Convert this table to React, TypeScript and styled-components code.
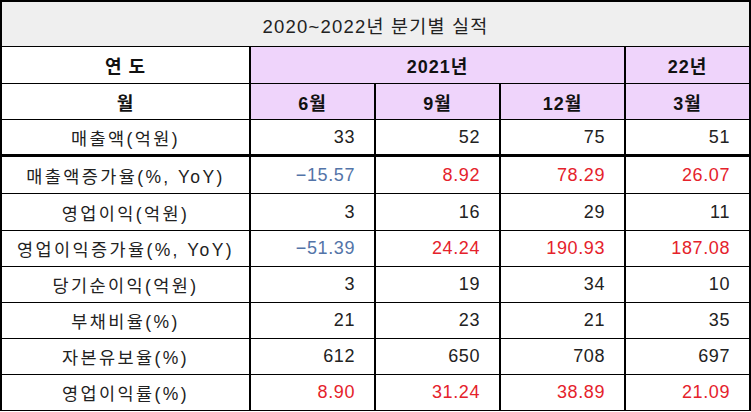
import React from "react";
import styled, { createGlobalStyle } from "styled-components";

const GlobalStyle = createGlobalStyle`
    html, body {
        margin: 0;
        padding: 0;
        background: #ffffff;
    }
    body {
        font-family: "Liberation Sans", "Noto Sans CJK KR", sans-serif;
        color: #111;
    }
`;

const Grid = styled.div`
    display: grid;
    width: 751px;
    box-sizing: border-box;
    grid-template-columns: 249px 125px 125px 125px 125px;
    grid-template-rows: 45px 37px 36px 37px 37px 37px 36px 36px 36px 36px 36px;
    border-left: 2px solid #000;
    border-top: 2px solid #000;
`;

const Cell = styled.div<{ $span?: number; $bg?: string; $thick?: boolean }>`
    box-sizing: border-box;
    grid-column: span ${(p) => p.$span ?? 1};
    background: ${(p) => p.$bg ?? "#ffffff"};
    border-right: 2px solid #000;
    border-bottom: ${(p) => (p.$thick ? "3px" : "1px")} solid #000;
    display: flex;
    align-items: center;
    justify-content: center;
    font-size: 17px;
`;

const TitleCell = styled(Cell)`
    font-size: 18.5px;
    letter-spacing: 1.2px;
    padding-top: 2px;
    color: #222;
`;

const HeadCell = styled(Cell)`
    font-weight: bold;
    font-size: 18px;
    letter-spacing: 1px;
`;

const LabelCell = styled(Cell)`
    font-size: 17.5px;
    letter-spacing: 2.4px;
    color: #222;
`;

const NumCell = styled(Cell)<{ $tone?: "red" | "blue" }>`
    justify-content: flex-end;
    padding-right: 19px;
    font-size: 18px;
    letter-spacing: 0.6px;
    color: ${(p) =>
        p.$tone === "red" ? "#e5222b" : p.$tone === "blue" ? "#5374a8" : "#222"};
`;

const PURPLE = "#efd4fb";

type Row = { label: string; values: string[]; colored?: boolean };

const rows: Row[] = [
    { label: "매출액(억원)", values: ["33", "52", "75", "51"] },
    { label: "매출액증가율(%, YoY)", values: ["−15.57", "8.92", "78.29", "26.07"], colored: true },
    { label: "영업이익(억원)", values: ["3", "16", "29", "11"] },
    { label: "영업이익증가율(%, YoY)", values: ["−51.39", "24.24", "190.93", "187.08"], colored: true },
    { label: "당기순이익(억원)", values: ["3", "19", "34", "10"] },
    { label: "부채비율(%)", values: ["21", "23", "21", "35"] },
    { label: "자본유보율(%)", values: ["612", "650", "708", "697"] },
    { label: "영업이익률(%)", values: ["8.90", "31.24", "38.89", "21.09"], colored: true },
];

const toneOf = (v: string, colored?: boolean) =>
    !colored ? undefined : v.startsWith("−") ? "blue" : "red";

export default function App() {
    return (
        <>
            <GlobalStyle />
            <Grid>
                <TitleCell $span={5} $bg="#efefef">
                    2020~2022년 분기별 실적
                </TitleCell>

                <HeadCell>연 도</HeadCell>
                <HeadCell $span={3} $bg={PURPLE}>
                    2021년
                </HeadCell>
                <HeadCell $bg={PURPLE}>22년</HeadCell>

                <HeadCell>월</HeadCell>
                <HeadCell $bg={PURPLE}>6월</HeadCell>
                <HeadCell $bg={PURPLE}>9월</HeadCell>
                <HeadCell $bg={PURPLE}>12월</HeadCell>
                <HeadCell $bg={PURPLE}>3월</HeadCell>

                {rows.map((r, i) => (
                    <React.Fragment key={r.label}>
                        <LabelCell $thick={i === 0}>{r.label}</LabelCell>
                        {r.values.map((v, j) => (
                            <NumCell key={j} $thick={i === 0} $tone={toneOf(v, r.colored)}>
                                {v}
                            </NumCell>
                        ))}
                    </React.Fragment>
                ))}
            </Grid>
        </>
    );
}
